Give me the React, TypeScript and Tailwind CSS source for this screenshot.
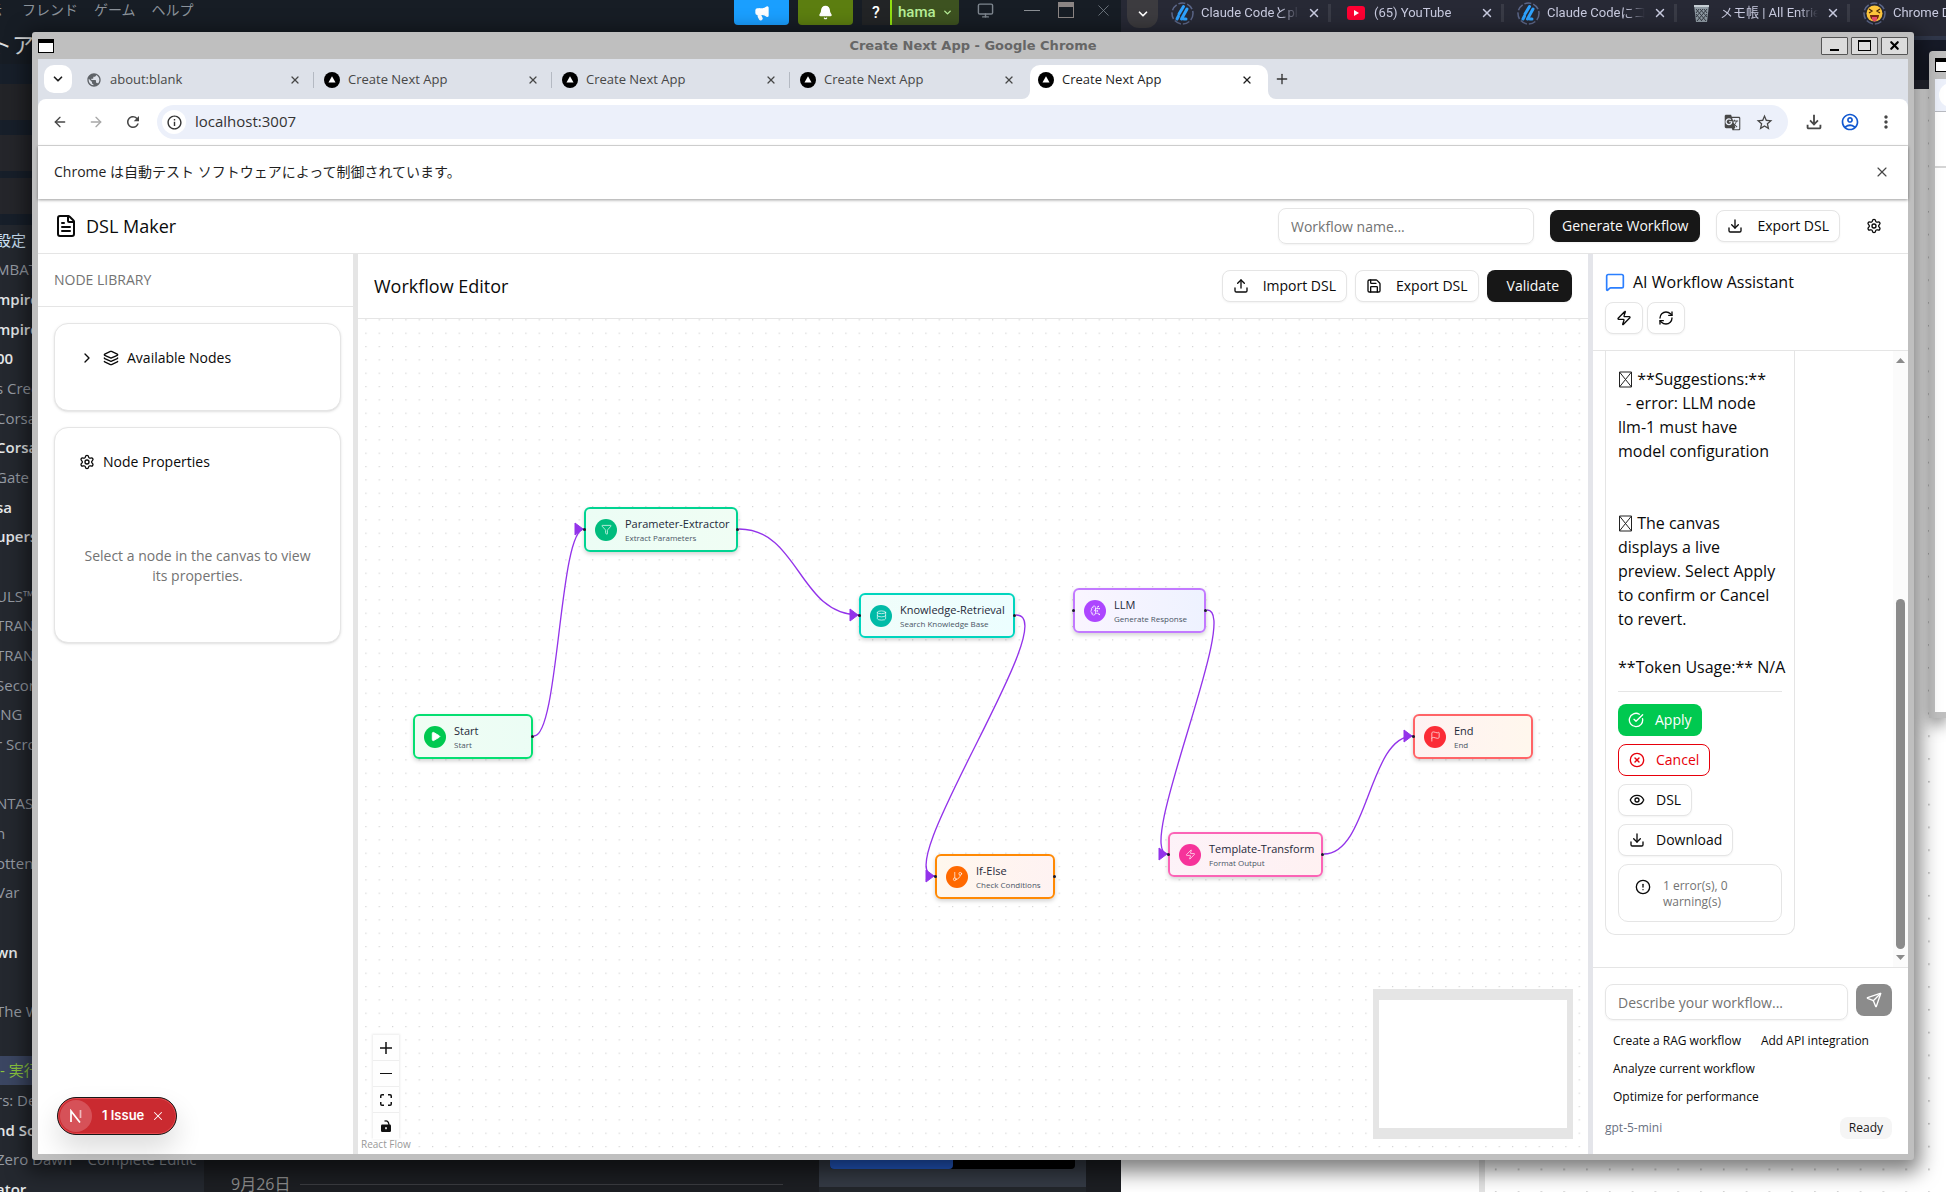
import React from "react";
import {
  ArrowLeft,
  ArrowRight,
  Bell,
  BrainCircuit,
  ChevronDown,
  ChevronRight,
  CircleAlert,
  CircleCheckBig,
  CircleX,
  Database,
  Download,
  Eye,
  FileText,
  Filter,
  Flag,
  GitBranch,
  Layers,
  Megaphone,
  MessageSquare,
  Monitor,
  Play,
  Plus,
  RefreshCw,
  Save,
  Send,
  Settings,
  Upload,
  X,
  Zap,
} from "lucide-react";
import {
  MdGTranslate,
  MdInfoOutline,
  MdMoreVert,
  MdOutlineFileDownload,
  MdPublic,
  MdRefresh,
  MdStarBorder,
  MdOutlineAccountCircle,
} from "react-icons/md";

/* ---------- Desktop behind the main window ---------- */

type LibraryRow = { text: string; bold?: boolean; tone?: "blue" | "active" };

const libraryRows: LibraryRow[] = [
  { text: "設定", tone: "blue" },
  { text: "MBAT™" },
  { text: "mpires", bold: true },
  { text: "mpires", bold: true },
  { text: "00", bold: true },
  { text: "s Creed" },
  { text: "Corsa" },
  { text: "Corsa", bold: true },
  { text: "Gate" },
  { text: "sa", bold: true },
  { text: "upers", bold: true },
  { text: "" },
  { text: "ULS™" },
  { text: "TRAN" },
  { text: "TRAN" },
  { text: "Secon" },
  { text: "ING" },
  { text: "r Scro" },
  { text: "" },
  { text: "NTAS" },
  { text: "n" },
  { text: "otten" },
  { text: "Var" },
  { text: "" },
  { text: "wn", bold: true },
  { text: "" },
  { text: "The W" },
  { text: "" },
  { text: "- 実行", tone: "active" },
  { text: "rs: De" },
  { text: "nd So", bold: true },
  { text: "Zero Dawn™ Complete Editic" },
  { text: "ator", bold: true },
];

function LibraryList() {
  return (
    <ul className="-ml-1 flex flex-1 flex-col">
      {libraryRows.map((r, i) => (
        <li
          key={i}
          className={
            "flex flex-1 items-center whitespace-nowrap text-[15px] " +
            (r.tone === "blue"
              ? "text-[#cfe3f7]"
              : r.tone === "active"
                ? "bg-[#3b4662] pl-1 text-[#8bc53f]"
                : r.bold
                  ? "font-semibold text-[#e6e8ea]"
                  : "text-[#969ba3]")
          }
        >
          {r.text}
        </li>
      ))}
    </ul>
  );
}

function GameClient() {
  return (
    <div className="flex w-[1121px] shrink-0 flex-col bg-[#171d25] text-[#8b929a]">
      <div className="flex h-8 shrink-0 items-start text-sm">
        <nav className="-ml-3 flex flex-1 gap-4 whitespace-nowrap leading-5">
          <span>示</span>
          <span className="ml-1">フレンド</span>
          <span>ゲーム</span>
          <span>ヘルプ</span>
        </nav>
        <div className="flex items-start">
          <button aria-label="News" className="mr-[9px] flex h-[25px] w-[55px] items-center justify-center rounded-b-sm bg-[#1a9fff] text-white">
            <Megaphone size={16} fill="currentColor" />
          </button>
          <button aria-label="Notifications" className="mr-[9px] flex h-[25px] w-[55px] items-center justify-center rounded-b-sm bg-[#5c7e10] text-white">
            <Bell size={15} fill="currentColor" />
          </button>
          <button className="flex h-[25px] w-[97px] items-center gap-[6px] rounded-b-sm bg-[#3d5220] font-['Roboto'] text-[15px] font-medium text-[#b8ef98]">
            <span className="flex h-full w-[30px] items-center justify-center border-r-2 border-[#90e010] bg-[#222426] text-base text-white">?</span>
            hama
            <ChevronDown size={11} strokeWidth={3} />
          </button>
          <div className="flex h-5 items-center text-[#7d858e]">
            <Monitor size={17} className="ml-[18px] mr-[30px]" />
            <span className="mr-[18px] h-px w-4 bg-[#8b8f94]" />
            <span className="mr-5 h-4 w-4 border border-t-[5px] border-[#8b8584]" />
            <X size={19} strokeWidth={1} className="mr-2" />
          </div>
        </div>
      </div>
      <div className="h-8 shrink-0 whitespace-nowrap text-[22px] leading-6 text-[#dcdedf]">
        <span className="-ml-8">ストア</span>
      </div>
      <div className="flex min-h-0 flex-1">
        <div className="-mb-3 flex w-[204px] shrink-0 flex-col overflow-hidden bg-[#24282f]">
          <div className="flex h-[161px] shrink-0 flex-col gap-[7px] bg-[#171f2a] pt-5">
            <div className="h-9 bg-[#232428]" />
            <div className="mt-2 h-9 bg-[#25262b]" />
            <div className="h-9 bg-[#25262b]" />
          </div>
          <LibraryList />
        </div>
        <div className="flex flex-1 items-end bg-[#1c1e22]">
          <div className="flex flex-1 items-center gap-[10px] pb-px pl-[27px] pr-9">
            <span className="text-base leading-[14px] text-[#8b8b8b]">9月26日</span>
            <span className="h-px flex-1 bg-[#3a3c40]" />
          </div>
          <div className="mr-[35px] flex h-12 w-[267px] flex-col items-center border-b-[5px] border-[#22262b] bg-[#343a44]">
            <div className="flex h-[25px] w-[245px] overflow-hidden rounded bg-black">
              <div className="w-1/2 rounded-r bg-[#2359c4]" />
            </div>
          </div>
        </div>
      </div>
    </div>
  );
}

function ZennMark() {
  return (
    <svg width="23" height="23" viewBox="0 0 23 23" className="shrink-0">
      <circle cx="11.5" cy="11.5" r="10.5" fill="none" stroke="#5b6688" strokeWidth="1.5" strokeDasharray="7 2" />
      <path d="M12.5 4.5 8 12M7.500 14 6 17M16 7 10.500 17M13 17h2" stroke="#2ea3ff" strokeWidth="3" strokeLinecap="round" fill="none" />
    </svg>
  );
}

function YouTubeMark() {
  return (
    <svg width="18" height="14" viewBox="0 0 18 14" className="shrink-0">
      <rect width="18" height="14" rx="3" fill="#ff0033" />
      <path d="M7 4v6l5-3z" fill="#fff" />
    </svg>
  );
}

function BinMark() {
  return (
    <svg width="17" height="19" viewBox="0 0 17 19" className="shrink-0">
      <path d="M1 1h15l-2 17H3z" fill="#8f9aa3" />
      <path d="M1 2h15" stroke="#c6ced4" strokeWidth="2" />
      <path d="M3 5l10 12M7 5l7 8M11 5l3 4M3 10l6 7M14 5 4 17M10 5l-7 8M6 5 3 9M14 10l-6 7" stroke="#353b44" strokeWidth="1" />
    </svg>
  );
}

function LaughMark() {
  return (
    <svg width="23" height="23" viewBox="0 0 23 23" className="shrink-0">
      <circle cx="11.5" cy="11.5" r="10.500" fill="none" stroke="#5b6688" strokeWidth="1.5" strokeDasharray="7 2" />
      <circle cx="11.500" cy="11.500" r="8" fill="#ffc83d" />
      <path d="m6 7 3 2-3 2M17 7l-3 2 3 2" stroke="#4b2a0a" strokeWidth="1.300" fill="none" />
      <path d="M7 13h9c0 3-2 5-4.500 5S7 16 7 13z" fill="#7a2a12" />
      <path d="M9 15h5v2a2.500 2.500 0 0 1-5 0z" fill="#f0506e" />
    </svg>
  );
}

const backTabs = [
  { icon: <ZennMark />, text: "Claude Codeとpla" },
  { icon: <YouTubeMark />, text: "(65) YouTube" },
  { icon: <ZennMark />, text: "Claude Codeにコマ" },
  { icon: <BinMark />, text: "メモ帳 | All Entries" },
  { icon: <LaughMark />, text: "Chrome D" },
];

function BackBrowser() {
  return (
    <div className="flex min-w-0 flex-1 flex-col bg-white">
      <div className="flex h-9 shrink-0 items-start overflow-hidden bg-[#272935]">
        <button aria-label="Search tabs" className="ml-[6px] flex h-7 w-[31px] shrink-0 items-center justify-center rounded-b-xl bg-[#3c3b3f] text-white">
          <ChevronDown size={14} strokeWidth={3} />
        </button>
        {backTabs.map((t, i) => (
          <div key={i} className="flex h-[26px] w-[173px] shrink-0 items-center pl-3 text-[#c9cbe0]">
            <span className="flex w-[25px] shrink-0 justify-center">{t.icon}</span>
            <span className="ml-[6px] w-[98px] overflow-hidden whitespace-nowrap font-['Roboto','Noto_Sans_CJK_JP',sans-serif] text-[13px] [mask-image:linear-gradient(to_right,black_80%,transparent)]">
              {t.text}
            </span>
            <X size={14} strokeWidth={2.5} className="ml-2 shrink-0" />
            <span className="ml-auto h-[18px] w-[3px] bg-[#393b46]" />
          </div>
        ))}
      </div>
      <div className="h-11 shrink-0 border-t-4 border-[#30374a] bg-[#171b28]" />
      <div className="h-[9px] shrink-0 bg-[#272935]" />
      <div className="flex flex-1">
        <div className="w-[358px] shrink-0" />
        <div className="w-[6px] shrink-0 bg-[#e2e2e2]" />
        <svg className="flex-1" aria-hidden="true">
          <defs>
            <pattern id="back-dots" width="22.8" height="22.8" patternUnits="userSpaceOnUse">
              <rect x="10" y="8" width="1.500" height="1.500" fill="#b0b0b0" />
            </pattern>
          </defs>
          <rect width="100%" height="100%" fill="url(#back-dots)" />
        </svg>
      </div>
    </div>
  );
}

function SideWindow() {
  return (
    <div className="absolute left-[1929px] right-0 top-[51px] flex h-[667px] flex-col overflow-hidden rounded-tl border-b-[6px] border-l-[6px] border-[#bfbfbf] bg-white shadow-[0_6px_16px_rgba(0,0,0,0.5)]">
      <div className="h-7 bg-[#bfbfbf] pt-[7px]">
        <WindowMark />
      </div>
      <div className="h-[33px] border-b border-[#b8bac0] bg-[#ecf0fa] pl-1 pt-1">
        <div className="h-6 w-6 rounded-full bg-white" />
      </div>
      <div className="h-14 border-b-2 border-[#d5d5d5]" />
    </div>
  );
}

/* ---------- Browser chrome ---------- */

function WindowMark() {
  return <div className="h-[14px] w-4 border border-t-4 border-black bg-white" />;
}

function TitleBar() {
  const button = "flex h-[18px] w-[27px] items-center justify-center rounded-[1px] border border-[#555] bg-[#dcdcdc]";
  return (
    <div className="flex h-[27px] shrink-0 items-center">
      <div className="w-[87px]">
        <WindowMark />
      </div>
      <div className="flex-1 text-center font-['DejaVu_Sans'] text-[13px] font-bold text-[#666]">
        Create Next App - Google Chrome
      </div>
      <div className="flex gap-[3px]">
        <button aria-label="Minimize" className={button}>
          <span className="mt-2 h-[2px] w-[9px] bg-black" />
        </button>
        <button aria-label="Maximize" className={button}>
          <span className="h-[11px] w-[13px] border border-t-2 border-black" />
        </button>
        <button aria-label="Close" className={button}>
          <X size={13} strokeWidth={4} color="#000" />
        </button>
      </div>
    </div>
  );
}

function TriangleMark() {
  return (
    <svg width="16" height="16" viewBox="0 0 16 16" className="shrink-0">
      <circle cx="8" cy="8" r="8" fill="#000" />
      <path d="M8 4.200 11.500 10.500h-7z" fill="#fff" />
    </svg>
  );
}

const tabs = [
  { title: "about:blank", globe: true, rule: true },
  { title: "Create Next App", rule: true },
  { title: "Create Next App", rule: true },
  { title: "Create Next App" },
  { title: "Create Next App", active: true },
];

function TabStrip() {
  return (
    <div className="flex h-10 shrink-0 items-end bg-[#dde1e9] pl-[6px]">
      <button aria-label="Search tabs" className="mb-[6px] mr-[6px] flex h-7 w-7 items-center justify-center rounded-[10px] bg-white text-[#1f1f1f]">
        <ChevronDown size={14} strokeWidth={3} />
      </button>
      <div className="flex">
        {tabs.map((t, i) => (
          <div
            key={i}
            className={
              "relative flex h-[34px] w-[238px] items-center pb-[5px] pl-2 pr-[2px] text-[13px] " +
              (t.active ? "rounded-t-[10px] bg-white text-[#1f1f1f]" : "text-[#474747]")
            }
          >
            {t.active && (
              <>
                <svg className="absolute -left-2 bottom-0" width="8" height="8">
                  <path d="M8 0v8H0a8 8 0 0 0 8-8z" fill="#fff" />
                </svg>
                <svg className="absolute -right-2 bottom-0" width="8" height="8">
                  <path d="M0 0v8h8a8 8 0 0 1-8-8z" fill="#fff" />
                </svg>
              </>
            )}
            {t.globe ? <MdPublic size={16} className="shrink-0 text-[#5f6368]" /> : <TriangleMark />}
            <span className="ml-2 flex-1">{t.title}</span>
            <button aria-label="Close tab" className="mr-3">
              <X size={12} strokeWidth={2.5} />
            </button>
            <span className={"h-4 w-px " + (t.rule ? "bg-[#b4b9c2]" : "bg-transparent")} />
          </div>
        ))}
      </div>
      <button aria-label="New tab" className="mb-3 ml-[6px] text-[#333]">
        <Plus size={16} />
      </button>
    </div>
  );
}

function Toolbar() {
  return (
    <div className="shrink-0 bg-[#dde1e9]">
      <div className="flex h-[47px] items-center rounded-t-lg border-b border-[#dcdcdc] bg-white pr-3 text-[#474747]">
        <div className="ml-[14px] flex gap-5">
          <button aria-label="Back"><ArrowLeft size={16} /></button>
          <button aria-label="Forward" className="text-[#a8a8a8]"><ArrowRight size={16} /></button>
          <button aria-label="Reload"><MdRefresh size={18} /></button>
        </div>
        <div className="ml-[15px] flex h-[34px] flex-1 items-center rounded-full bg-[#ecf0fa] px-[5px] pr-[14px]">
          <span className="flex h-6 w-6 items-center justify-center rounded-full bg-white text-[#333]">
            <MdInfoOutline size={17} />
          </span>
          <input aria-label="Address" defaultValue="localhost:3007" className="ml-[9px] min-w-0 flex-1 bg-transparent pb-[2px] text-[15px] text-[#333] outline-none" />
          <button aria-label="Translate"><MdGTranslate size={17} /></button>
          <button aria-label="Bookmark" className="ml-[14px]"><MdStarBorder size={19} /></button>
        </div>
        <button aria-label="Downloads" className="ml-[15px]"><MdOutlineFileDownload size={22} /></button>
        <button aria-label="Profile" className="ml-[15px] text-[#1158d0]"><MdOutlineAccountCircle size={20} /></button>
        <button aria-label="Menu" className="ml-4"><MdMoreVert size={20} /></button>
      </div>
    </div>
  );
}

function InfoBar() {
  return (
    <div className="z-10 flex h-[53px] shrink-0 items-center bg-white px-4 pb-[2px] text-sm text-[#1f1f1f] shadow-[0_1px_3px_rgba(0,0,0,0.4)]">
      <span className="flex-1">Chrome は自動テスト ソフトウェアによって制御されています。</span>
      <button aria-label="Dismiss" className="mr-[2px] text-[#474747]">
        <X size={16} strokeWidth={1.750} />
      </button>
    </div>
  );
}

/* ---------- DSL Maker app ---------- */

const outline = "flex h-8 items-center rounded-lg border border-[#e5e5e5] bg-white px-[10px] text-sm shadow-xs";
const solid = "flex h-8 items-center rounded-lg bg-[#171717] text-sm text-[#fafafa] shadow-xs";

function AppHeader() {
  return (
    <header className="flex h-[55px] shrink-0 items-center gap-4 border-b border-[#e5e5e5] bg-white px-4">
      <h1 className="flex flex-1 items-center gap-2 text-lg">
        <FileText size={24} />
        DSL Maker
      </h1>
      <input
        aria-label="Workflow name"
        placeholder="Workflow name..."
        className="h-9 w-64 rounded-lg border border-[#e5e5e5] px-3 text-sm shadow-xs outline-none placeholder:text-[#737373]"
      />
      <button className={solid + " px-3"}>Generate Workflow</button>
      <button className={outline + " gap-[14px]"}>
        <Download size={16} />
        Export DSL
      </button>
      <button aria-label="Settings" className="flex h-8 w-9 items-center justify-center">
        <Settings size={16} />
      </button>
    </header>
  );
}

function NodeLibrary() {
  const card = "rounded-[14px] border border-[#e5e5e5] bg-white px-6 pt-6 shadow-sm";
  return (
    <aside className="relative flex w-[315px] shrink-0 flex-col bg-white">
      <h2 className="flex h-[53px] items-center border-b border-[#e5e5e5] px-4 pb-px text-sm text-[#737373]">
        NODE LIBRARY
      </h2>
      <div className="flex flex-col gap-4 px-4 pr-3 pt-4">
        <section className={card + " pb-[42px]"}>
          <button className="flex items-center gap-2 text-sm">
            <ChevronRight size={16} />
            <Layers size={16} />
            Available Nodes
          </button>
        </section>
        <section className={card + " pb-14"}>
          <h3 className="flex items-center gap-2 text-sm">
            <Settings size={16} />
            Node Properties
          </h3>
          <p className="pt-[74px] text-center text-sm text-[#737373]">
            Select a node in the canvas to view its properties.
          </p>
        </section>
      </div>
      <IssueBadge />
    </aside>
  );
}

function IssueBadge() {
  return (
    <div className="absolute bottom-[19px] left-[19px] flex h-[38px] items-center rounded-full border border-[#171717] bg-[#ca2a30] p-[2px] font-['Inter'] text-[13px] font-semibold text-white shadow-[0_14px_28px_rgba(0,0,0,0.14),inset_0_0_0_1px_#e5484d]">
      <span className="flex h-8 w-8 items-center justify-center rounded-full bg-[#d65158]">
        <svg width="14" height="14" viewBox="0 0 14 14" fill="none" stroke="#fff" strokeWidth="1.700">
          <path d="M2 13V2l9 11.500" />
          <path d="M11.500 1v8" strokeOpacity="0.6" />
        </svg>
      </span>
      <button className="ml-[10px]">1 Issue</button>
      <button aria-label="Dismiss issue" className="ml-[7px] mr-[9px]">
        <X size={14} strokeWidth={1.750} />
      </button>
    </div>
  );
}

type FlowNode = {
  title: string;
  sub: string;
  icon: React.ReactNode;
  left: number;
  top: number;
  width: number;
  box: string;
  dot: string;
  input?: boolean;
  output?: boolean;
};

/* Node positions on the canvas, in canvas pixels. */
const nodes: FlowNode[] = [
  { title: "Start", sub: "Start", icon: <Play size={11} fill="currentColor" />, left: 55, top: 395, width: 120, box: "border-[#05df72] from-green-50 to-emerald-50", dot: "bg-[#00c950]", output: true },
  { title: "Parameter-Extractor", sub: "Extract Parameters", icon: <Filter size={11} strokeWidth={1.500} />, left: 226, top: 188, width: 154, box: "border-[#00d492] from-emerald-50 to-green-50", dot: "bg-[#00bc7d]", input: true, output: true },
  { title: "Knowledge-Retrieval", sub: "Search Knowledge Base", icon: <Database size={11} strokeWidth={1.500} />, left: 501, top: 274, width: 156, box: "border-[#00d5be] from-teal-50 to-cyan-50", dot: "bg-[#00bba7]", input: true, output: true },
  { title: "If-Else", sub: "Check Conditions", icon: <GitBranch size={11} strokeWidth={1.500} />, left: 577, top: 535, width: 120, box: "border-[#ff8904] from-orange-50 to-red-50", dot: "bg-[#ff6900]", input: true, output: true },
  { title: "LLM", sub: "Generate Response", icon: <BrainCircuit size={11} strokeWidth={1.500} />, left: 715, top: 269, width: 133, box: "border-[#c27aff] from-purple-50 to-indigo-50", dot: "bg-[#ad46ff]", input: true, output: true },
  { title: "Template-Transform", sub: "Format Output", icon: <Zap size={11} strokeWidth={1.500} />, left: 810, top: 513, width: 155, box: "border-[#fb64b6] from-pink-50 to-rose-50", dot: "bg-[#f6339a]", input: true, output: true },
  { title: "End", sub: "End", icon: <Flag size={11} strokeWidth={1.500} />, left: 1055, top: 395, width: 120, box: "border-[#ff6467] from-red-50 to-orange-50", dot: "bg-[#fb2c36]", input: true },
];

const edges: [number, number, number, number][] = [
  [176, 417, 226, 210],
  [381, 210, 501, 296],
  [658, 296, 577, 557],
  [849, 291, 810, 535],
  [966, 535, 1055, 417],
];

function edgePath([x1, y1, x2, y2]: [number, number, number, number]) {
  const dx = x2 - x1;
  const c = dx >= 0 ? dx / 2 : 5.6 * Math.sqrt(-dx);
  return `M${x1} ${y1}C${x1 + c} ${y1} ${x2 - c} ${y2} ${x2} ${y2}`;
}

function Canvas() {
  return (
    <div className="relative min-h-0 flex-1 overflow-hidden bg-white">
      <svg className="absolute inset-0 h-full w-full" aria-hidden="true">
        <defs>
          <pattern id="dots" x="7.300" y="0.300" width="13.3333" height="13.3333" patternUnits="userSpaceOnUse">
            <circle cx="0.700" cy="0.700" r="0.600" fill="#c4c4c4" />
          </pattern>
        </defs>
        <rect width="100%" height="100%" fill="url(#dots)" />
        {edges.map((e, i) => (
          <g key={i}>
            <path d={edgePath(e)} fill="none" stroke="#9333ea" strokeWidth="1.330" />
            <path d={`M${e[2] - 9} ${e[3] - 6}l8 6-8 6z`} fill="#9333ea" stroke="#9333ea" strokeLinejoin="round" />
          </g>
        ))}
      </svg>
      {nodes.map((n) => (
        <div
          key={n.title}
          className={"absolute flex h-[45px] items-center gap-2 rounded-[6px] border-2 bg-gradient-to-r pl-[9px] shadow-[0_2px_4px_rgba(0,0,0,0.18)] " + n.box}
          style={{ left: n.left, top: n.top, width: n.width }}
        >
          {n.input && <span className="absolute -left-[3px] top-[19px] h-[3px] w-[3px] rounded-full bg-[#1a192b]" />}
          {n.output && <span className="absolute -right-[3px] top-[19px] h-[3px] w-[3px] rounded-full bg-[#1a192b]" />}
          <span className={"flex h-[22px] w-[22px] shrink-0 items-center justify-center rounded-full text-white " + n.dot}>
            {n.icon}
          </span>
          <span className="whitespace-nowrap pt-[2px]">
            <span className="block text-[11px] leading-[14px] text-[#1e2939]">{n.title}</span>
            <span className="block text-[8px] leading-[13px] text-[#4a5565]">{n.sub}</span>
          </span>
        </div>
      ))}
      <div className="absolute bottom-[15px] left-[15px] flex w-[26px] flex-col divide-y divide-[#eee] bg-[#fefefe] shadow-[0_0_2px_1px_rgba(0,0,0,0.08)]">
        <button aria-label="Zoom in" className="flex h-[26px] items-center justify-center">
          <svg width="12" height="12" viewBox="0 0 12 12"><path d="M6 0v12M0 6h12" stroke="#111" strokeWidth="1.500" /></svg>
        </button>
        <button aria-label="Zoom out" className="flex h-[26px] items-center justify-center">
          <svg width="12" height="12" viewBox="0 0 12 12"><path d="M0 5.500h12" stroke="#111" strokeWidth="1" /></svg>
        </button>
        <button aria-label="Fit view" className="flex h-[26px] items-center justify-center">
          <svg width="12" height="12" viewBox="0 0 12 12" fill="none" stroke="#111" strokeWidth="1.500">
            <path d="M.75 4V2Q.75.750 2 .75h2M8 .75h2q1.250 0 1.250 1.250v2M11.250 8v2q0 1.250-1.250 1.250H8M4 11.250H2Q.75 11.250.75 10V8" />
          </svg>
        </button>
        <button aria-label="Toggle interactivity" className="flex h-[26px] items-center justify-center">
          <svg width="10" height="12" viewBox="0 0 10 12">
            <path d="M3.500 1.200Q7.500-.2 8 5" fill="none" stroke="#111" strokeWidth="1.300" />
            <rect y="4.500" width="10" height="7.500" rx="1.200" fill="#111" />
            <rect x="4.200" y="7.200" width="1.600" height="2" fill="#fff" />
          </svg>
        </button>
      </div>
      <a href="#" className="absolute bottom-0 left-0 bg-white/50 px-[3px] pb-[3px] text-[10px] leading-[13px] text-[#999]">
        React Flow
      </a>
      <div className="absolute bottom-[15px] right-[15px] h-[150px] w-[200px] border-x-[6px] border-y-[11px] border-[#e5e5e5] bg-white" />
    </div>
  );
}

function Editor() {
  return (
    <main className="flex min-w-0 flex-1 flex-col border-l-[5px] border-[#e5e5e5] bg-white">
      <div className="flex h-[65px] shrink-0 items-center gap-2 border-b border-[#e5e5e5] px-4">
        <h2 className="flex-1 text-lg">Workflow Editor</h2>
        <button className={outline + " gap-[14px]"}>
          <Upload size={16} />
          Import DSL
        </button>
        <button className={outline + " gap-[14px]"}>
          <Save size={16} />
          Export DSL
        </button>
        <button className={solid + " pl-5 pr-[13px]"}>Validate</button>
      </div>
      <Canvas />
    </main>
  );
}

function MissingGlyph() {
  return (
    <svg width="15" height="17" viewBox="0 0 15 17" className="inline-block align-[-3px]" aria-hidden="true">
      <path d="M1.500 1h12v15h-12zM1.500 1l12 15M13.500 1l-12 15" fill="none" stroke="#222" strokeWidth="1" />
    </svg>
  );
}

function Scrollbar() {
  return (
    <div className="flex w-[15px] shrink-0 flex-col items-center bg-[#fbfbfb] py-[5px]" aria-hidden="true">
      <svg width="9" height="8" viewBox="0 0 9 8"><path d="M0 7l4.500-5L9 7z" fill="#8b8b8b" /></svg>
      <div className="flex min-h-0 flex-1 flex-col">
        <div className="flex-[235]" />
        <div className="w-[9px] flex-[350] rounded-full bg-[#8b8b8b]" />
        <div className="h-[5px]" />
      </div>
      <svg width="9" height="8" viewBox="0 0 9 8"><path d="M0 1l4.500 5L9 1z" fill="#8b8b8b" /></svg>
    </div>
  );
}

const suggestions = ["Create a RAG workflow", "Add API integration", "Analyze current workflow", "Optimize for performance"];

function Assistant() {
  return (
    <aside className="flex w-80 shrink-0 flex-col border-l-[5px] border-[#e4e5ea] bg-white">
      <div className="border-b border-[#e5e5e5] px-3 py-4">
        <h2 className="flex items-center gap-2 text-base">
          <MessageSquare size={20} className="text-[#2b7fff]" />
          AI Workflow Assistant
        </h2>
        <div className="mt-2 flex gap-1">
          <button aria-label="Quick actions" className={outline}><Zap size={16} /></button>
          <button aria-label="Refresh" className={outline}><RefreshCw size={16} /></button>
        </div>
      </div>
      <div className="flex min-h-0 flex-1">
        <div className="flex min-w-0 flex-1 flex-col justify-end overflow-hidden pb-8 pl-3">
          <div className="w-[190px] rounded-b-[10px] border border-t-0 border-[#e5e5e5] p-3 pt-4">
            <div className="whitespace-pre text-base">
              <p><MissingGlyph /> **Suggestions:**{"\n"}  - error: LLM node{"\n"}llm-1 must have{"\n"}model configuration{"\n\n\n"}</p>
              <p><MissingGlyph /> The canvas{"\n"}displays a live{"\n"}preview. Select Apply{"\n"}to confirm or Cancel{"\n"}to revert.{"\n\n"}**Token Usage:** N/A</p>
            </div>
            <div className="mt-3 flex flex-col items-start gap-2 border-t border-[#e5e5e5] pt-3">
              <button className="flex h-8 items-center gap-[11px] rounded-lg bg-[#00c950] px-[10px] text-sm text-white">
                <CircleCheckBig size={16} />
                Apply
              </button>
              <button className="flex h-8 items-center gap-[11px] rounded-lg border border-[#e7000b] px-[10px] text-sm text-[#e7000b]">
                <CircleX size={16} />
                Cancel
              </button>
              <button className={outline + " gap-[11px]"}>
                <Eye size={16} />
                DSL
              </button>
              <button className={outline + " gap-[11px]"}>
                <Download size={16} />
                Download
              </button>
              <div role="alert" className="flex w-full items-start gap-3 rounded-[10px] border border-[#e5e5e5] px-4 pb-[11px] pt-[13px] text-xs text-[#737373]">
                <CircleAlert size={16} className="mt-px shrink-0 text-[#0a0a0a]" />
                <span>1 error(s), 0<br />warning(s)</span>
              </div>
            </div>
          </div>
        </div>
        <Scrollbar />
      </div>
      <div className="border-t border-[#e5e5e5] pb-[15px] pl-3 pr-4 pt-4">
        <div className="flex items-start gap-2">
          <input
            aria-label="Describe your workflow"
            placeholder="Describe your workflow..."
            className="h-9 min-w-0 flex-1 rounded-lg border border-[#e5e5e5] px-3 text-sm shadow-xs outline-none placeholder:text-[#737373]"
          />
          <button aria-label="Send" className="flex h-8 w-9 items-center justify-center rounded-lg bg-[#8b8b8b] text-white">
            <Send size={16} />
          </button>
        </div>
        <div className="mt-[9px] flex flex-wrap gap-1">
          {suggestions.map((s) => (
            <button key={s} className="h-6 px-2 text-xs text-[#0a0a0a]">{s}</button>
          ))}
        </div>
        <div className="mt-2 flex items-center justify-between text-xs">
          <span className="text-[#6a7282]">gpt-5-mini</span>
          <span className="flex h-[22px] items-center rounded-lg bg-[#f5f5f5] px-[9px] text-[#171717]">Ready</span>
        </div>
      </div>
    </aside>
  );
}

function MainWindow() {
  return (
    <div className="absolute inset-8 flex flex-col rounded-[3px] bg-[#bfbfbf] px-[6px] pb-[6px] shadow-[0_6px_20px_6px_rgba(0,0,0,0.5)]">
      <TitleBar />
      <TabStrip />
      <Toolbar />
      <InfoBar />
      <AppHeader />
      <div className="flex min-h-0 flex-1">
        <NodeLibrary />
        <Editor />
        <Assistant />
      </div>
    </div>
  );
}

export default function App() {
  return (
    <div className="relative flex h-screen w-full overflow-hidden bg-[#171d25] font-['Open_Sans','Noto_Sans_CJK_JP',sans-serif] text-[#0a0a0a] [&_button]:shrink-0">
      <GameClient />
      <BackBrowser />
      <SideWindow />
      <MainWindow />
    </div>
  );
}
